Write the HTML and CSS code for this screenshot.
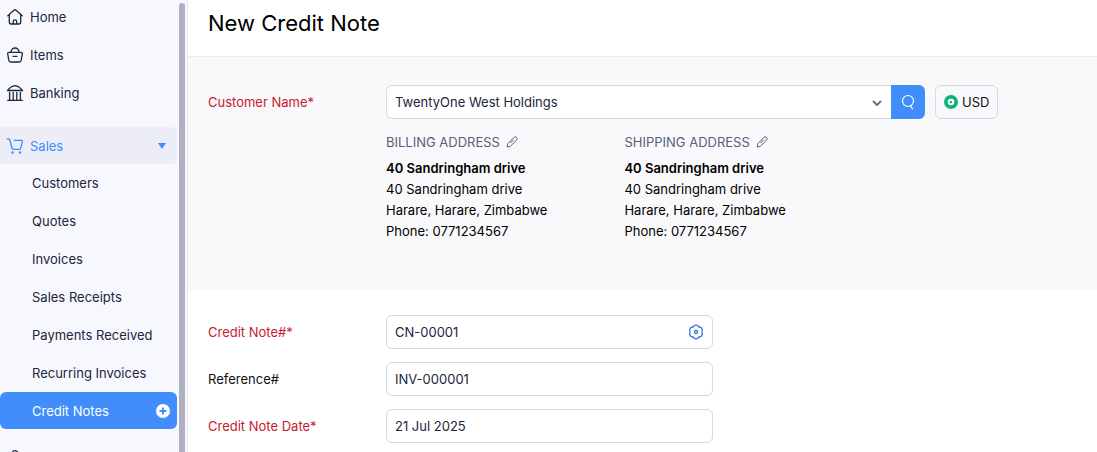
FILE: index.html
```html
<!DOCTYPE html>
<html lang="en">
<head>
<meta charset="utf-8">
<meta name="viewport" content="width=device-width, initial-scale=1">
<title>New Credit Note</title>
<link rel="stylesheet" href="styles.css">
</head>
<body>
<div class="app">
  <aside class="sidebar">
    <nav class="nav" aria-label="Main">
      <a class="nav-item" href="#"><svg class="nav-icon" viewBox="0 0 16 16"><path d="M.8 6.700 6.900 1.300a1.600 1.600 0 0 1 2.200 0L15.200 6.700M2.300 5.800v7.200a2 2 0 0 0 2 2h7.400a2 2 0 0 0 2-2V5.800M6.300 14.800v-2.300a1.700 1.700 0 0 1 3.400 0v2.300"/></svg>Home</a>
      <a class="nav-item" href="#"><svg class="nav-icon" viewBox="0 0 16 16"><path d="M4 5.300a4 4.300 0 0 1 8 0M1.800 5.300h12.400a1.200 1.200 0 0 1 1.100 1.500l-1.100 6.400a2 2 0 0 1-2 1.800H3.800a2 2 0 0 1-2-1.800L.7 6.800a1.200 1.200 0 0 1 1.100-1.500zM6 9.300h4"/></svg>Items</a>
      <a class="nav-item" href="#"><svg class="nav-icon" viewBox="0 0 16 16"><path d="M.7 15.300h14.600M.7 5.500C2.500 3 5.500 1 8 .7c2.500.3 5.500 2.300 7.300 4.800zM2.600 7.500v7.500M6.200 7.500v7.500M9.800 7.500v7.500M13.400 7.500v7.500"/></svg>Banking</a>
      <div class="nav-group">
        <a class="nav-item nav-open" href="#"><svg class="nav-icon" viewBox="0 0 16 16"><path d="M0 .8h1.500c.8 0 1.200.4 1.400 1.200l2 8c.2.900.8 1.300 1.600 1.300h5.800c.8 0 1.300-.4 1.500-1.200L15.400 3.300c.1-.6-.2-1-.8-1H7.300"/><circle class="solid" cx="5.500" cy="14.500" r="1.200"/><circle class="solid" cx="13" cy="14.500" r="1.200"/></svg>Sales<svg class="caret" viewBox="0 0 8 6"><path d="M0 0h8L4 6z"/></svg></a>
        <div class="subnav">
          <a class="nav-item nav-sub" href="#">Customers</a>
          <a class="nav-item nav-sub" href="#">Quotes</a>
          <a class="nav-item nav-sub" href="#">Invoices</a>
          <a class="nav-item nav-sub" href="#">Sales Receipts</a>
          <a class="nav-item nav-sub" href="#">Payments Received</a>
          <a class="nav-item nav-sub" href="#">Recurring Invoices</a>
          <a class="nav-item nav-sub nav-active" href="#" aria-current="page">Credit Notes<svg class="plus" viewBox="0 0 14 14"><circle cx="7" cy="7" r="7"/><path d="M7 3.500v7M3.500 7h7"/></svg></a>
        </div>
      </div>
      <a class="nav-item" href="#" aria-label="Purchases"><svg class="nav-icon" viewBox="0 0 16 16"><path d="M5.500 6V2.700a2.500 2 0 0 1 5 0V6M2.500 5.500h11l1 9.500h-13z"/></svg></a>
    </nav>
    <div class="scroll-thumb"></div>
  </aside>

  <main class="main">
    <header class="page-head"><h1 class="title">New Credit Note</h1></header>
    <form>
      <section class="customer">
        <div class="row">
          <label class="label required" for="customer">Customer Name*</label>
          <div class="customer-controls">
            <div class="picker">
              <div class="select-wrap">
                <select class="field select" id="customer"><option>TwentyOne West Holdings</option></select>
                <svg class="chevron" viewBox="0 0 10 6"><path d="M1 1l4 4 4-4"/></svg>
              </div>
              <button class="search" type="button" aria-label="Search customers"><svg viewBox="0 0 14 16"><circle cx="7" cy="7" r="5.500"/><path d="M9.500 11.500l2 3.500"/></svg></button>
            </div>
            <button class="currency" type="button"><svg viewBox="0 0 14 14"><circle class="coin" cx="7" cy="7" r="7"/><circle class="ring" cx="7" cy="7" r="2.300"/></svg>USD</button>
          </div>
        </div>
        <div class="addresses">
          <div class="address">
            <div class="address-head">BILLING ADDRESS<button class="edit" type="button" aria-label="Edit billing address"><svg viewBox="0 0 12 12"><path d="M1.200 11l.5-3.200L7.800 1.500a1.900 1.900 0 0 1 2.800 2.600L4.300 10.300zM7.600 3.800 4.500 7"/></svg></button></div>
            <address class="lines"><strong>40 Sandringham drive</strong><span>40 Sandringham drive</span><span>Harare, Harare, Zimbabwe</span><span>Phone: 0771234567</span></address>
          </div>
          <div class="address">
            <div class="address-head">SHIPPING ADDRESS<button class="edit" type="button" aria-label="Edit shipping address"><svg viewBox="0 0 12 12"><path d="M1.200 11l.5-3.200L7.800 1.500a1.900 1.900 0 0 1 2.800 2.600L4.300 10.300zM7.600 3.800 4.500 7"/></svg></button></div>
            <address class="lines"><strong>40 Sandringham drive</strong><span>40 Sandringham drive</span><span>Harare, Harare, Zimbabwe</span><span>Phone: 0771234567</span></address>
          </div>
        </div>
      </section>
      <section class="details">
        <div class="row">
          <label class="label required" for="number">Credit Note#*</label>
          <div class="field field-group">
            <input class="bare" id="number" type="text" value="CN-00001">
            <button class="gear" type="button" aria-label="Number settings"><svg viewBox="0 0 16 16"><path d="M5.100 3A3.200 3.200 0 0 1 10.900 3A3.200 3.200 0 0 1 13.800 8A3.200 3.200 0 0 1 10.900 13A3.200 3.200 0 0 1 5.100 13A3.200 3.200 0 0 1 2.200 8A3.200 3.200 0 0 1 5.100 3z"/><circle cx="8" cy="8" r="1.500"/></svg></button>
          </div>
        </div>
        <div class="row">
          <label class="label" for="reference">Reference#</label>
          <input class="field" id="reference" type="text" value="INV-000001">
        </div>
        <div class="row">
          <label class="label required" for="date">Credit Note Date*</label>
          <input class="field" id="date" type="text" value="21 Jul 2025">
        </div>
      </section>
    </form>
  </main>
</div>
</body>
</html>
```
FILE: styles.css
```css
* { box-sizing: border-box; }

body {
  margin: 0;
  font: 13px/20px Inter, "Liberation Sans", sans-serif;
  color: #111;
  background: #fff;
}

button, input, select { font: inherit; color: inherit; }
button { padding: 0; border: 0; background: none; cursor: pointer; }
svg { display: block; flex: none; fill: none; stroke: currentColor; }

.app { display: flex; height: 100vh; overflow: hidden; }

/* Sidebar */
.sidebar {
  display: flex;
  flex: none;
  gap: 2px;
  width: 188px;
  padding-right: 2px;
  border-right: 1px solid #e6e6f0;
  background: #f7f7fe;
  overflow: hidden;
}
.nav { display: flex; flex: 1; flex-direction: column; gap: 1px; margin-top: -2px; }
.nav-item {
  display: flex;
  flex: none;
  align-items: center;
  gap: 7px;
  height: 37px;
  padding: 0 7px;
  border-radius: 0 6px 6px 0;
  color: #21263c;
  text-decoration: none;
}
.nav-icon { width: 16px; height: 16px; stroke-width: 1.3; stroke-linecap: round; overflow: visible; }
.solid { fill: currentColor; stroke: none; }
.nav-group { margin: 15px 0 9px; }
.nav-open { padding-right: 11px; background: #ededf7; color: #408dfb; }
.caret { width: 8px; height: 6px; margin-left: auto; fill: currentColor; stroke: none; }
.subnav { display: flex; flex-direction: column; gap: 1px; }
.nav-sub { padding-left: 32px; }
.nav-active { border-radius: 6px; background: #408dfb; color: #fff; }
.plus { width: 14px; height: 14px; margin-left: auto; fill: #fff; stroke: #408dfb; stroke-width: 2; }
.plus circle { stroke: none; }
.scroll-thumb { width: 6px; margin-top: 3px; border-radius: 3px 3px 0 0; background: #b0b0c0; }

/* Page */
.main { flex: 1; min-width: 0; }
.page-head { padding: 7px 20px 17px; border-bottom: 1px solid #ebebf0; }
.title { margin: 0; font-size: 22px; font-weight: 400; line-height: 32px; color: #000; }
.row { display: grid; grid-template-columns: 178px minmax(0, 327px); align-items: center; }
.label { color: #111; }
.required { color: #c5202e; }
.field {
  width: 100%;
  height: 34px;
  padding: 0 8px;
  border: 1px solid #d7d8e1;
  border-radius: 6px;
  background: #fff;
  color: #21263c;
  outline: 0;
}

.customer { padding: 28px 20px 48px; background: #f9f9fb; }
.customer .row { grid-template-columns: 178px minmax(0, 1fr); }
.customer-controls { display: flex; gap: 10px; }
.picker { display: flex; flex: 0 1 539px; min-width: 0; }
.select-wrap { display: grid; flex: 1; align-items: center; min-width: 0; }
.select-wrap > * { grid-area: 1 / 1; }
.select { appearance: none; border-right: 0; border-radius: 6px 0 0 6px; }
.chevron { justify-self: end; width: 10px; height: 6px; margin: 2px 9px 0 0; color: #6c718a; stroke-width: 2; pointer-events: none; }
.search { display: grid; place-items: center; width: 34px; height: 34px; border-radius: 0 6px 6px 0; background: #408dfb; color: #fff; }
.search svg { width: 14px; height: 16px; stroke-width: 1.2; stroke-linecap: round; }
.currency {
  display: flex;
  align-items: center;
  gap: 4px;
  height: 34px;
  padding: 0 8px;
  border: 1px solid #d7d8e1;
  border-radius: 6px;
  background: #f9f9fb;
}
.currency svg { width: 14px; height: 14px; stroke: none; }
.coin { fill: #13b07b; }
.ring { fill: none; stroke: #fff; stroke-width: 2; }

.addresses { display: flex; gap: 77px; margin: 13px 0 0 178px; }
.address-head { display: flex; align-items: center; gap: 6px; color: #5a5f78; }
.edit { color: #5a5f78; }
.edit svg { width: 12px; height: 12px; stroke-linejoin: round; }
.lines { display: grid; grid-auto-rows: 21px; margin-top: 6px; font-style: normal; line-height: 21px; color: #000; }
.lines strong { font-weight: 600; }

.details { display: grid; gap: 13px; padding: 25px 20px; }
.field-group { display: flex; align-items: center; }
.bare { flex: 1; min-width: 0; padding: 0; border: 0; outline: 0; background: none; }
.gear { color: #2f76dc; }
.gear svg { width: 16px; height: 16px; stroke-width: 1.3; }
```
